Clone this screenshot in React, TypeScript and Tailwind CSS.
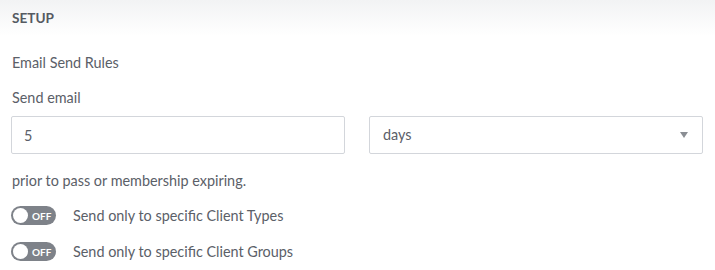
import { ChangeEvent, useState } from 'react';

function Toggle({ label }: { label: string }) {
  return (
    <div className="flex h-[19px] items-center gap-[17px]">
      <div className="flex h-[19px] w-[45px] items-center rounded-full bg-[#7e8289] pl-[2px]">
        <span className="h-[15px] w-[15px] rounded-full bg-white" />
        <span className="ml-[4px] text-[10px] font-bold leading-none text-white">OFF</span>
      </div>
      <span className="text-[14.4px] leading-[19px] text-[#5b6068]">{label}</span>
    </div>
  );
}

export default function App() {
  const [count, setCount] = useState('5');

  return (
    <div className="h-[270px] w-[715px] overflow-hidden bg-white font-['Lato','Noto_Sans',sans-serif] text-[#5b6068]">
      <div className="h-[36px] bg-gradient-to-b from-[#f2f3f4] to-white px-[12px] pt-[10px]">
        <div className="text-[13.6px] font-bold leading-[16px] text-[#555a62]">SETUP</div>
      </div>

      <div className="pl-[11px] pr-[12px]">
        <div className="mt-[18px] px-[1px] text-[14.4px] leading-[18px]">Email Send Rules</div>
        <div className="mt-[17px] px-[1px] text-[14.4px] leading-[18px]">Send email</div>

        <div className="mt-[9px] grid grid-cols-2 gap-[24px]">
          <input
            value={count}
            onChange={(e: ChangeEvent<HTMLInputElement>) => setCount(e.target.value)}
            className="h-[38px] rounded-[2px] border border-[#d3d6db] px-[12px] text-[14.4px] text-[#5b6068] outline-none"
          />
          <div className="flex h-[38px] items-center justify-between rounded-[2px] border border-[#d3d6db] pl-[13px] pr-[14px] text-[14.4px]">
            <span>days</span>
            <svg width="8" height="6" viewBox="0 0 8 6">
              <path d="M0 0h8L4 6z" fill="#8a8e94" />
            </svg>
          </div>
        </div>

        <div className="mt-[18px] px-[1px] text-[14.4px] leading-[18px]">prior to pass or membership expiring.</div>

        <div className="mt-[16px] flex flex-col gap-[17px]">
          <Toggle label="Send only to specific Client Types" />
          <Toggle label="Send only to specific Client Groups" />
        </div>
      </div>
    </div>
  );
}
